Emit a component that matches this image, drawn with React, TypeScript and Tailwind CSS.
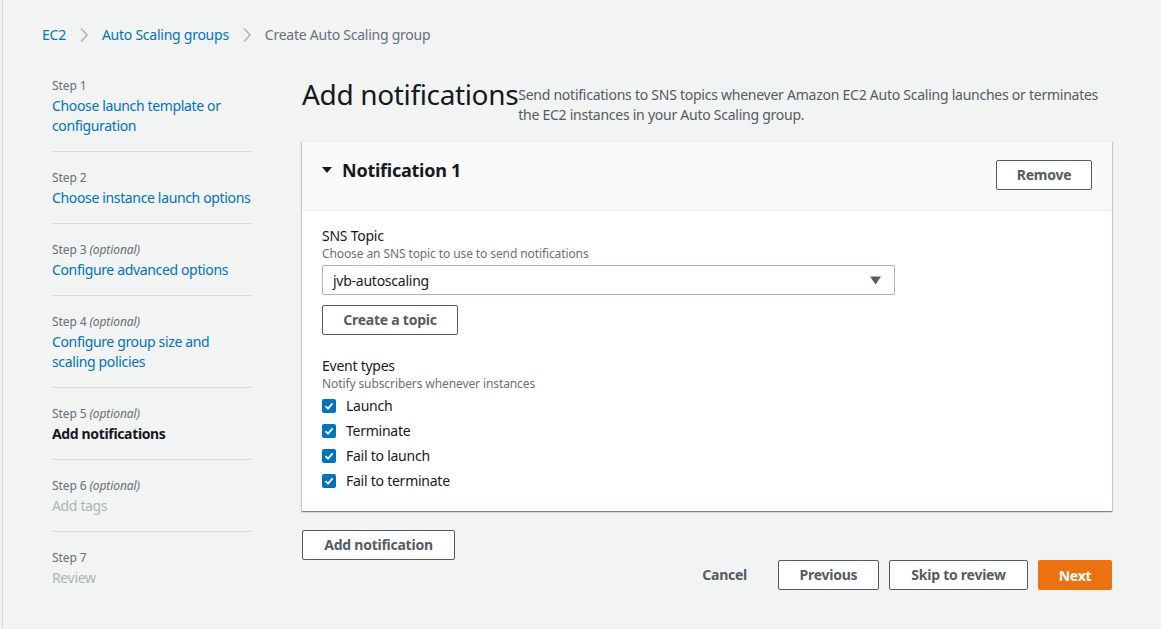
import React from 'react'

const steps = [
  { label: 'Step 1', optional: false, title: 'Choose launch template or configuration', state: 'link' },
  { label: 'Step 2', optional: false, title: 'Choose instance launch options', state: 'link' },
  { label: 'Step 3', optional: true, title: 'Configure advanced options', state: 'link' },
  { label: 'Step 4', optional: true, title: 'Configure group size and scaling policies', state: 'link' },
  { label: 'Step 5', optional: true, title: 'Add notifications', state: 'active' },
  { label: 'Step 6', optional: true, title: 'Add tags', state: 'disabled' },
  { label: 'Step 7', optional: false, title: 'Review', state: 'disabled' },
]

const events = ['Launch', 'Terminate', 'Fail to launch', 'Fail to terminate']

function Chevron() {
  return (
    <svg width="10" height="16" viewBox="0 0 10 16" className="mx-[13px]">
      <path d="M2 1.5 L8 8 L2 14.5" fill="none" stroke="#aab7b8" strokeWidth="1.6" />
    </svg>
  )
}

function Checkbox() {
  return (
    <span className="flex h-[14px] w-[14px] items-center justify-center rounded-[2px] bg-[#0073bb]">
      <svg width="10" height="10" viewBox="0 0 10 10">
        <path d="M1.5 5.2 L4 7.6 L8.6 2.4" fill="none" stroke="#fff" strokeWidth="1.8" />
      </svg>
    </span>
  )
}

function Button({ children, className = '' }: { children: React.ReactNode; className?: string }) {
  return (
    <button
      className={
        'h-[30px] whitespace-nowrap rounded-[2px] border border-[#545b64] bg-white text-[14px] font-bold leading-[20px] text-[#545b64] ' +
        className
      }
    >
      {children}
    </button>
  )
}

export default function App() {
  return (
    <div className="min-h-screen bg-[#f2f3f3] pl-[2px] font-['Noto_Sans',sans-serif] tracking-[-0.25px] text-[#16191f]">
      <div className="min-h-screen border-l border-[#d5dbdb] pr-[49px]">
        <nav className="flex items-center pl-[39px] pt-[25px] text-[14px] leading-[20px]">
          <span className="text-[#0073bb]">EC2</span>
          <Chevron />
          <span className="text-[#0073bb]">Auto Scaling groups</span>
          <Chevron />
          <span className="text-[#687078]">Create Auto Scaling group</span>
        </nav>

        <div className="mt-[15px] flex">
          <ul className="ml-[49px] w-[200px] shrink-0">
            {steps.map((s, i) => (
              <li
                key={s.label}
                className={
                  'pt-[18px] ' + (i < steps.length - 1 ? 'border-b border-[#d5dbdb] pb-[15px]' : '')
                }
              >
                <div className="text-[12px] leading-[16px] tracking-[-0.1px] text-[#687078]">
                  {s.label}
                  {s.optional && <i> (optional)</i>}
                </div>
                <div
                  className={
                    'mt-[2px] text-[14px] leading-[20px] tracking-[-0.35px] ' +
                    (s.state === 'link'
                      ? 'text-[#0073bb]'
                      : s.state === 'active'
                        ? 'font-bold text-[#16191f]'
                        : 'text-[#aab7b8]')
                  }
                >
                  {s.title}
                </div>
              </li>
            ))}
          </ul>

          <main className="ml-[50px] flex-1 pt-[16px]">
            <div className="flex items-start">
              <h1 className="whitespace-nowrap text-[28px] font-normal leading-[36px] tracking-[-0.35px]">
                Add notifications
              </h1>
              <p className="mt-[9px] text-[14px] leading-[20px] text-[#545b64]">
                Send notifications to SNS topics whenever Amazon EC2 Auto Scaling launches or terminates the EC2
                instances in your Auto Scaling group.
              </p>
            </div>

            <section className="mt-[16px] border-t border-[#eaeded] bg-white shadow-[0_1px_1px_0_rgba(0,28,36,0.3),1px_1px_1px_0_rgba(0,28,36,0.15),-1px_1px_1px_0_rgba(0,28,36,0.15)]">
              <div className="flex items-start justify-between border-b border-[#eaeded] bg-[#fafafa] px-5 pb-[20px] pt-[18px]">
                <div className="-mt-px flex items-center">
                  <svg width="10" height="10" viewBox="0 0 10 10" className="mr-[10px]">
                    <path d="M0 2 L10 2 L5 8 Z" fill="#16191f" />
                  </svg>
                  <span className="text-[18px] font-bold leading-[22px]">Notification 1</span>
                </div>
                <Button className="w-[96px]">Remove</Button>
              </div>

              <div className="px-5 pb-[20px] pt-[15px]">
                <div className="text-[14px] leading-[20px]">SNS Topic</div>
                <div className="text-[12px] leading-[16px] tracking-[-0.1px] text-[#687078]">
                  Choose an SNS topic to use to send notifications
                </div>
                <div className="mt-[3px] flex h-[30px] w-[573px] items-center justify-between rounded-[2px] border border-[#aab7b8] bg-white pl-[10px] pr-[13px] text-[14px]">
                  <span>jvb-autoscaling</span>
                  <svg width="11" height="9" viewBox="0 0 11 9">
                    <path d="M0 0.5 L11 0.5 L5.5 8.5 Z" fill="#545b64" />
                  </svg>
                </div>
                <Button className="mt-[10px] w-[136px]">Create a topic</Button>

                <div className="mt-[21px] text-[14px] leading-[20px]">Event types</div>
                <div className="text-[12px] leading-[16px] tracking-[-0.1px] text-[#687078]">
                  Notify subscribers whenever instances
                </div>
                <div className="mt-[4px] flex flex-col gap-[5px]">
                  {events.map((e) => (
                    <label key={e} className="flex h-[20px] items-center gap-[10px] text-[14px] leading-[20px]">
                      <Checkbox />
                      {e}
                    </label>
                  ))}
                </div>
              </div>
            </section>

            <Button className="mt-[19px] w-[153px]">Add notification</Button>

            <div className="flex items-center justify-end gap-[10px]">
              <button className="mr-[21px] text-[14px] font-bold leading-[20px] text-[#545b64]">Cancel</button>
              <Button className="w-[101px]">Previous</Button>
              <Button className="w-[139px]">Skip to review</Button>
              <button className="h-[30px] w-[74px] rounded-[2px] bg-[#ec7211] text-[14px] font-bold text-white">
                Next
              </button>
            </div>
          </main>
        </div>
      </div>
    </div>
  )
}
